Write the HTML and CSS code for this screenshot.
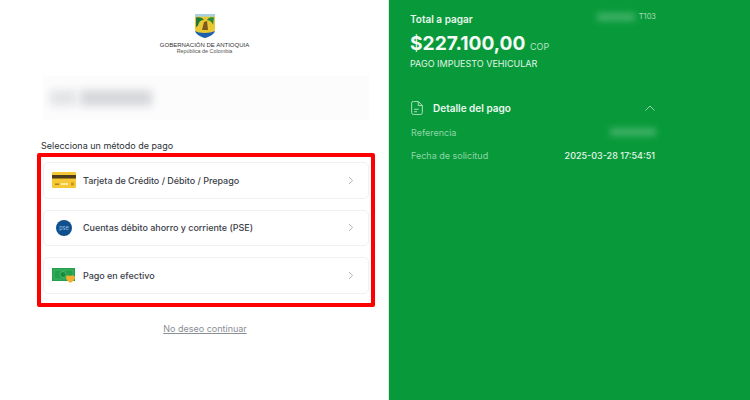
FILE: index.html
```html
<!DOCTYPE html>
<html lang="es">
<head>
<meta charset="utf-8">
<title>Pago</title>
<link rel="stylesheet" href="styles.css">
</head>
<body>
<main class="page">
  <section class="left">
    <header class="brand">
      <svg class="shield" width="20" height="24" viewBox="0 0 20 27" preserveAspectRatio="none">
        <path d="M0 0H20V16C20 22 15 25 10 27C5 25 0 22 0 16Z" fill="#e9c832"/>
        <path d="M0 0H20V3H0Z" fill="#a9cfe0"/>
        <path d="M0 19C4 22 15 22 20 19C19 23 15 25 10 27C5 25 1 23 0 19Z" fill="#1d5fae"/>
        <path d="M1 4C4 3 8 4 9 7C6 6 4 9 3 13L1 15Z" fill="#1f7a3a"/>
        <path d="M19 4C16 3 13 4 12 7C15 7 17 9 18 12Z" fill="#2a8a3e"/>
        <path d="M9 9L12 8L13 18H7Z" fill="#7a5a1e"/>
      </svg>
      <div class="brand-name">GOBERNACIÓN DE ANTIOQUIA</div>
      <div class="brand-sub">República de Colombia</div>
    </header>
    <div class="summary"><span class="smear one"></span><span class="smear two"></span></div>
    <h2 class="choose">Selecciona un método de pago</h2>
    <div class="methods">
      <div class="frame"></div>
      <a class="method">
        <svg class="m-icon" width="24" height="16" viewBox="0 0 24 16">
          <rect width="24" height="16" rx="1" fill="#f6c934"/>
          <rect y="3" width="24" height="3.5" fill="#4b3d1c"/>
          <rect x="3" y="11.5" width="4" height="1.4" fill="#a87a12"/>
          <rect x="9" y="11" width="7" height="2" fill="#fbe9a6"/>
          <rect x="19" y="10.5" width="3" height="3" fill="#c9961c"/>
        </svg>
        <span class="m-label">Tarjeta de Crédito / Débito / Prepago</span>
        <svg class="chev" width="6" height="9" viewBox="0 0 6 9"><path d="M1 1L4.6 4.5L1 8" fill="none" stroke="#b0b3b8" stroke-width="1"/></svg>
      </a>
      <a class="method">
        <svg class="m-icon" width="24" height="16" viewBox="0 0 24 16">
          <circle cx="12" cy="8" r="8" fill="#11508f"/>
          <text x="12" y="10" text-anchor="middle" class="pse">pse</text>
        </svg>
        <span class="m-label">Cuentas débito ahorro y corriente (PSE)</span>
        <svg class="chev" width="6" height="9" viewBox="0 0 6 9"><path d="M1 1L4.6 4.5L1 8" fill="none" stroke="#b0b3b8" stroke-width="1"/></svg>
      </a>
      <a class="method">
        <svg class="m-icon" width="24" height="16" viewBox="0 0 24 16">
          <rect y="1" width="23" height="13" fill="#22a04a"/>
          <rect x="2" y="3" width="19" height="9" fill="none" stroke="#5cc47a" stroke-width=".6"/>
          <circle cx="11" cy="7.5" r="3" fill="#158a3a" stroke="#6ed08c" stroke-width=".6"/>
          <path d="M14 10.5C14 8.5 16 8 18 9C20 8 23 8.5 23 10.5C23 13 20 15 18.5 16C17 15 14 13 14 10.5Z" fill="#f5ae2e"/>
        </svg>
        <span class="m-label">Pago en efectivo</span>
        <svg class="chev" width="6" height="9" viewBox="0 0 6 9"><path d="M1 1L4.6 4.5L1 8" fill="none" stroke="#b0b3b8" stroke-width="1"/></svg>
      </a>
    </div>
    <a class="cancel">No deseo continuar</a>
  </section>
  <aside class="right">
    <div class="top-row">
      <div class="total-label">Total a pagar</div>
      <div class="code"><span class="smear-light code-smear"></span>T103</div>
    </div>
    <div class="amount">$227.100,00 <span class="cur">COP</span></div>
    <div class="concept">PAGO IMPUESTO VEHICULAR</div>
    <div class="detail-head">
      <svg class="doc" width="12" height="14" viewBox="0 0 14 17" fill="none" stroke="#bfe6cb" stroke-width="1.1">
        <path d="M2.5 .5H8.5L13.5 5.5V14A2.5 2.5 0 0 1 11 16.5H3A2.5 2.5 0 0 1 .5 14V2.5A2 2 0 0 1 2.5 .5Z"/>
        <path d="M8.5 .5V5.5H13.5M3.5 10H9M3.5 13H7"/>
      </svg>
      <span class="detail-title">Detalle del pago</span>
      <svg class="up" width="10" height="6" viewBox="0 0 10 6"><path d="M.5 5.5L5 1L9.5 5.5" fill="none" stroke="#8fd3a6" stroke-width="1"/></svg>
    </div>
    <div class="row"><span class="key">Referencia</span><span class="smear-light ref-smear"></span></div>
    <div class="row"><span class="key">Fecha de solicitud</span><span class="val">2025-03-28 17:54:51</span></div>
  </aside>
</main>
</body>
</html>
```
FILE: styles.css
```css
* { box-sizing: border-box; }
html, body { margin: 0; height: 100%; }
body { font-family: Inter, "Liberation Sans", sans-serif; background: #fff; overflow: hidden; }
.page { display: flex; width: 750px; height: 400px; }

.left { width: 389px; padding: 14px 20px 0 41px; display: flex; flex-direction: column; border-right: 1px solid #dcebe1; }
.brand { display: flex; flex-direction: column; align-items: center; height: 62px; }
.shield { display: block; flex: none; filter: blur(.3px); }
.brand-name { font-family: "Liberation Sans", sans-serif; font-size: 6px; line-height: 8px; margin-top: 3px; color: #333; white-space: nowrap; }
.brand-sub { font-family: "Liberation Sans", sans-serif; font-size: 5.4px; line-height: 5px; color: #555; white-space: nowrap; }

.summary { width: 326px; height: 44px; margin-left: 2px; background: #fcfcfd; display: flex; align-items: center; gap: 4px; padding: 0 0 0 7px; overflow: hidden; }
.smear { display: block; height: 16px; filter: blur(4px); }
.smear.one { width: 26px; background: #e3e4e6; }
.smear.two { width: 72px; background: #d6d7da; }

.choose { margin: 20px 0 0; font-size: 9px; line-height: 12px; font-weight: 400; color: #2b2f36; }

.methods { position: relative; margin: 10px 0 0 2px; width: 326px; display: flex; flex-direction: column; gap: 10.75px; }
.frame { position: absolute; left: -6px; top: -9px; width: 338px; height: 154px; border: 4px solid #f00; border-radius: 2px; pointer-events: none; }
.method { display: flex; align-items: center; height: 36.75px; padding: 0 14px 0 8px; border: 1px solid #f0f1f3; border-radius: 5px; }
.m-icon { flex: none; }
.m-label { flex: 1; margin-left: 7px; font-size: 9px; font-weight: 500; color: #3c4048; white-space: nowrap; letter-spacing: -.03px; }
.chev { flex: none; }
.pse { font-family: Inter, sans-serif; font-size: 5.5px; fill: #9cc3e6; }

.cancel { margin: 29px 0 0 1px; width: 326px; text-align: center; font-size: 9px; line-height: 12px; color: #8a8e95; text-decoration: underline; }

.right { flex: 1; background: #089a3a; padding: 13px 94px 0 21px; color: #fff; }
.top-row { display: flex; justify-content: space-between; align-items: flex-start; }
.total-label { font-size: 10px; line-height: 13px; font-weight: 600; color: #e6f6eb; }
.code { display: flex; align-items: center; font-size: 7.5px; line-height: 9px; margin-top: -1px; color: #a9dcb9; }
.smear-light { display: block; background: #3fb166; filter: blur(3px); }
.code-smear { width: 38px; height: 8px; margin-right: 4px; }
.amount { margin-top: 5px; font-size: 19.2px; line-height: 25px; font-weight: 700; color: #f4fbf6; white-space: nowrap; }
.cur { font-size: 9px; font-weight: 400; color: #b5e3c4; }
.concept { margin-top: -1px; font-size: 9px; line-height: 11px; color: #e2f5e8; }
.detail-head { display: flex; align-items: center; margin-top: 30px; height: 17px; }
.doc { margin-left: 1px; }
.detail-title { margin-left: 10px; font-size: 10px; font-weight: 600; color: #eaf8ef; flex: 1; }
.up { margin-right: 1px; }
.row { display: flex; justify-content: space-between; align-items: center; height: 12px; margin-top: 11px; }
.detail-head + .row { margin-top: 10px; }
.key { margin-left: 1px; font-size: 9px; color: #8fd6a8; }
.val { margin-right: 1px; font-size: 9px; font-weight: 500; color: #e6f6eb; white-space: nowrap; }
.ref-smear { width: 46px; height: 8px; }
```
